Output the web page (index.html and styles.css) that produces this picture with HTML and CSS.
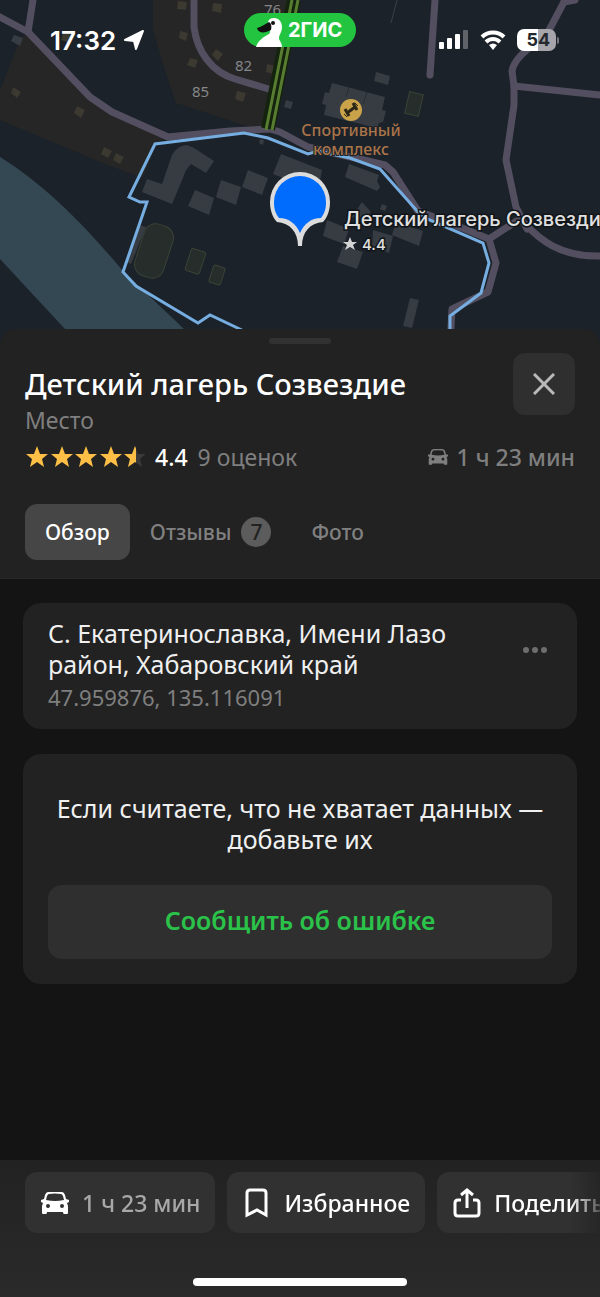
FILE: index.html
```html
<!DOCTYPE html>
<html lang="ru">
<head>
    <meta charset="UTF-8">
    <meta name="viewport" content="width=device-width, initial-scale=1.0">
    <title>Детский лагерь Созвездие</title>
    <link rel="stylesheet" href="styles.css">
</head>
<body>
    <!-- Map -->
    <div class="map">
        <svg class="map-canvas" viewBox="0 0 600 345" preserveAspectRatio="xMidYMin slice">
            <rect width="600" height="345" fill="#1c2229"/>
            <!-- Residential areas -->
            <g fill="#252625">
                <path d="M153 0H290L268 128 250 127 176 103 163 64 153 30Z"/>
                <path d="M0 90 20 40 29 32 92 97 112 112 165 138 155 145 143 178 110 166 0 120Z"/>
            </g>
            <path d="M0 157C50 188 90 232 123 271L184 329 195 345H80L65 329 0 259Z" fill="#344854"/>
            <!-- Small houses -->
            <g fill="#3b3930">
                <path d="M178 1l9 1-1 8-9-1zM213 3l9 1-1 9-9-2zM180 31l8 2-2 8-7-3zM216 49l7 5-5 7-6-6zM190 58l8 2-3 8-8-3zM267 64l9 2-2 8-8-2zM237 91l9 2-3 9-8-3zM13 87l8 5-4 6-6-5zM77 106l8 4-4 8-7-5zM104 147l8 4-4 7-7-4zM116 153l8 4-4 7-7-4zM63 33l9 2-2 8-9-3z"/>
            </g>
            <g fill="#363c41">
                <path d="M14 35l9 3-3 8-9-5zM286 100l7 2-2 7-7-2zM260 139l4 1-1 5-4-2z"/>
                <path d="M376 72l14 4-2 9-14-4z"/>
                <path d="M332 83l53 14-3 13 4 1-3 11-4 1-2 5-53-13 2-10-4-1 3-12 4 1z"/>
                <path d="M349 87l-3 10M367 92l-4 12" stroke="#272d33"/>
                <path d="M172 155Q178 145 187 145L194 148 214 161 206 173 191 164Q185 170 183 178L172 204 142 192 147 179 162 184Z"/>
                <path d="M195 190l19 8-5 17-21-9zM221 180l20 7-5 18-20-8zM248 170l20 8-6 17-20-8zM281 154l41 16-4 22-45-18z"/>
                <path d="M349 164l30 11-2 6 3 6-3 4-32-14zM362 202l9 10-8 8-11-3zM382 204l5 2-2 5-5-2z"/>
                <path d="M327 220l22 9-5 15-21-8zM373 230l20 6-4 17-17-6zM396 222l27 9-4 15-27-11zM343 246l20 6-6 17-20-7zM410 298l9 2-7 28-9-2zM139 225l7 2-15 37-4-2z"/>
            </g>
            <g fill="#262d2a" stroke="#3a4336">
                <rect x="139" y="224" width="30" height="54" rx="12" transform="rotate(18 154 251)"/>
                <rect x="188" y="250" width="15" height="23" rx="2" transform="rotate(18 196 261)"/>
                <rect x="211" y="266" width="12" height="18" rx="2" transform="rotate(18 217 275)"/>
                <rect x="407" y="93" width="14" height="22" transform="rotate(13 414 104)"/>
            </g>
            <!-- Roads -->
            <g fill="none" stroke="#534f60" stroke-width="7" stroke-linejoin="round" stroke-linecap="round">
                <path d="M0 17 28 32 90 97 112 112 168 137 230 131 270 129 280 132 308 147 355 158 385 165 393 172 418 211 455 225 489 239 496 263 488 292 452 309 450 345"/>
                <path d="M33 0 28 32"/>
                <path d="M194 0V27C197 52 212 72 235 79L272 90"/>
                <path d="M435 0 430 75"/>
                <path d="M565 0 546 36C530 46 514 58 512 71L514 86V105L506 160 516 207 527 229M489 239 520 219M523 222C540 240 560 257 600 256"/>
                <path d="M514 86 600 95M564 2 575 0"/>
            </g>
            <path d="M397 0 391 23" stroke="#3b4045"/>
            <path d="M294 0 268 129" stroke="#13230e" stroke-width="14"/>
            <path d="M292 0 266 130M298 0 272 130" stroke="#587d30" stroke-width="3"/>
            <!-- Camp territory -->
            <path d="M246 332 210 315 198 323 136 286 123 272 147 202 140 202 129 197 155 144 244 133 268 138 308 154 318 151 350 158 380 169 418 212 425 218 483 243 489 263 481 293 450 316V345" fill="none" stroke="#76aee2" stroke-width="3"/>
            <g class="house-number">
                <text x="264" y="15">76</text>
                <text x="235" y="71">82</text>
                <text x="192" y="97">85</text>
            </g>
            <!-- Sports POI -->
            <circle cx="351" cy="110" r="11" fill="#c9a24a"/>
            <g stroke="#2a2618" fill="none">
                <path d="M347 113 355 107" stroke-width="3"/>
                <path d="M345 109 349 116M353 103 357 110" stroke-width="3"/>
                <path d="M344 114 347 117M355 103 358 106" stroke-width="1"/>
            </g>
            <g class="poi-label">
                <text x="351" y="136">Спортивный</text>
                <text x="351" y="155">комплекс</text>
            </g>
            <!-- Pin -->
            <path d="M298 246C298 232 290 223 277 222C272 217 270 209 270 202A30 30 0 0 1 330 202C330 209 328 217 323 222C310 223 302 232 302 246Z" fill="#dcdcdc"/>
            <path d="M300 233C296 224 289 218 279 218C275 213 274 208 274 202A26 26 0 0 1 326 202C326 208 325 213 321 218C311 218 304 224 300 233Z" fill="#006cfe"/>
            <text class="camp-label" x="344" y="226">Детский лагерь Созвездие</text>
            <path d="M350 237l2 5h5l-4 3 2 5-5-3-5 3 2-5-4-3h5z" fill="#d4d4d4"/>
            <text class="camp-rating" x="362" y="250">4.4</text>
        </svg>

        <div class="status-bar">
            <div class="status-left">
                <span>17:32</span>
                <svg width="22" height="22" viewBox="0 0 22 22"><path d="M2 11 20 2 13 20 11 12Z" fill="#fff" stroke="#fff" stroke-width="2" stroke-linejoin="round"/></svg>
            </div>
            <div class="brand">
                <svg width="30" height="34" viewBox="0 0 30 34">
                    <path d="M2 34C4 28 9 24 15 21C17 19 16 17 14 14C13 8 15 5 20 5C25 5 28 9 28 14C28 19 25 22 25 25C25 28 28 29 28 34Z" fill="#fff"/>
                    <path d="M15 9C11 11 7 14 3 15C4 20 10 21 17 17C18 13 17 10 15 9Z" fill="#111"/>
                    <circle cx="19" cy="10" r="2" fill="#111"/>
                </svg>
                <span>2ГИС</span>
            </div>
            <div class="status-right">
                <svg width="30" height="20" viewBox="0 0 30 20" fill="#fff">
                    <rect x="0" y="12" width="5" height="7" rx="1"/>
                    <rect x="8" y="8" width="5" height="11" rx="1"/>
                    <rect x="16" y="4" width="5" height="15" rx="1"/>
                    <rect x="24" y="0" width="5" height="19" rx="1" opacity=".3"/>
                </svg>
                <svg width="26" height="20" viewBox="0 0 26 20" fill="none" stroke="#fff" stroke-width="4">
                    <path d="M2 7C8 1 18 1 24 7M6 12C10 8 16 8 20 12"/>
                    <path d="M9 15Q13 12 17 15L13 20Z" fill="#fff" stroke="none"/>
                </svg>
                <div class="battery"><span>5</span><span class="battery-empty">4</span></div>
            </div>
        </div>
    </div>

    <!-- Place card header -->
    <header class="sheet">
        <div class="grabber"></div>
        <div class="title-row">
            <div>
                <h1>Детский лагерь Созвездие</h1>
                <p class="kind">Место</p>
            </div>
            <button class="close" aria-label="Закрыть">
                <svg width="22" height="22" viewBox="0 0 22 22" stroke="#bababa" stroke-width="3"><path d="M1 1 21 21M21 1 1 21"/></svg>
            </button>
        </div>
        <div class="rating-row">
            <svg width="120" height="22" viewBox="0 0 120 22">
                <defs>
                    <path id="star" d="M11 0 14 8 22 8 16 13 18 21 11 16 4 21 6 13 0 8 8 8Z"/>
                    <clipPath id="half"><rect width="12" height="22"/></clipPath>
                </defs>
                <g fill="#fdbf45">
                    <use href="#star" x="1"/>
                    <use href="#star" x="26"/>
                    <use href="#star" x="50"/>
                    <use href="#star" x="75"/>
                </g>
                <g transform="translate(99 0)">
                    <use href="#star" fill="#3a3a3a"/>
                    <use href="#star" fill="#fdbf45" clip-path="url(#half)"/>
                </g>
            </svg>
            <strong>4.4</strong>
            <span>9 оценок</span>
            <span class="drive">
                <svg width="20" height="16" viewBox="0 0 28 22"><use href="#car"/></svg>
                1 ч 23 мин
            </span>
        </div>
        <nav class="tabs">
            <button class="tab active">Обзор</button>
            <button class="tab">Отзывы <span class="count">7</span></button>
            <button class="tab">Фото</button>
        </nav>
    </header>

    <main>
        <section class="card address">
            <div>
                <p>С. Екатеринославка, Имени Лазо район, Хабаровский край</p>
                <p class="coords">47.959876, 135.116091</p>
            </div>
            <button class="more" aria-label="Ещё">
                <svg width="26" height="8" viewBox="0 0 26 8" fill="#6e6e6e"><circle cx="4" cy="4" r="3"/><circle cx="13" cy="4" r="3"/><circle cx="22" cy="4" r="3"/></svg>
            </button>
        </section>
        <section class="card feedback">
            <p>Если считаете, что не хватает данных — добавьте их</p>
            <button class="report">Сообщить об ошибке</button>
        </section>
    </main>

    <!-- Bottom actions -->
    <footer>
        <div class="actions">
            <button class="action time">
                <svg width="28" height="22" viewBox="0 0 28 22">
                    <path id="car" fill="currentColor" fill-rule="evenodd" d="M7 0Q14-1 21 0Q23 0 24 3L25 7 28 8V10L26 11 27 14V21Q27 22 26 22H23Q22 22 22 20H6Q6 22 5 22H2Q1 22 1 21V14L2 11 0 10V8L3 7 4 3Q5 0 7 0ZM8 2Q7 2 6 4L5 8Q14 10 23 8L22 4Q21 2 20 2Q14 1 8 2ZM7 12A2 2 0 1 0 7 16 2 2 0 1 0 7 12ZM21 12A2 2 0 1 0 21 16 2 2 0 1 0 21 12Z"/>
                </svg>
                <span>1 ч 23 мин</span>
            </button>
            <button class="action">
                <svg width="28" height="30" viewBox="0 0 28 30" fill="none" stroke="#fff" stroke-width="3"><path d="M4 27V5Q4 2 7 2H20Q23 2 23 5V27L14 22Z"/></svg>
                <span>Избранное</span>
            </button>
            <button class="action">
                <svg width="28" height="30" viewBox="0 0 28 30" fill="none" stroke="#fff" stroke-width="3"><path d="M8 12H5Q2 12 2 15V25Q2 28 5 28H23Q26 28 26 25V15Q26 12 23 12H20M14 20V2M8 7 14 2 20 7"/></svg>
                <span>Поделиться</span>
            </button>
        </div>
        <div class="home-indicator"></div>
    </footer>
</body>
</html>
```
FILE: styles.css
```css
* { box-sizing: border-box; }
body { margin: 0; min-height: 100vh; display: flex; flex-direction: column; background: #141414; color: #fff; font-family: "Noto Sans", sans-serif; overflow-x: hidden; }
h1, p { margin: 0; }
button { border: none; padding: 0; background: none; color: inherit; font: inherit; cursor: pointer; }
svg { display: block; flex: none; }

/* Map */
.map { position: relative; height: 345px; overflow: hidden; background: #1c2229; }
.map-canvas { width: 100%; height: 100%; }
.house-number { font-size: 15px; fill: #85878a; }
.poi-label { font-size: 16px; font-weight: 500; fill: #aa7449; text-anchor: middle; paint-order: stroke; stroke: #1c2229; stroke-width: 2px; }
.camp-label, .camp-rating { font-family: Inter, sans-serif; font-weight: 500; fill: #e0e0e0; paint-order: stroke; stroke: #111519; stroke-width: 3px; }
.camp-label { font-size: 20px; }
.camp-rating { font-size: 15px; }

.status-bar { position: absolute; top: 0; left: 0; right: 0; padding-top: 13px; display: grid; grid-template-columns: 1fr auto 1fr; font-family: Inter, sans-serif; }
.status-left { display: flex; align-items: center; gap: 7px; height: 54px; padding-left: 50px; font-size: 26px; font-weight: 600; }
.status-right { display: flex; align-items: center; justify-content: flex-end; gap: 11px; height: 54px; padding-right: 44px; }
.brand { display: flex; align-items: center; gap: 4px; width: 112px; height: 34px; padding-left: 10px; border-radius: 17px; background: #23c43f; font-size: 20px; font-weight: 700; }
.battery { position: relative; display: flex; width: 39px; height: 22px; color: #25282d; font-size: 18px; line-height: 22px; font-weight: 700; }
.battery::after { content: ""; position: absolute; top: 8px; right: -3px; width: 2px; height: 7px; border-radius: 0 2px 2px 0; background: #77777e; }
.battery span { flex: 1; text-align: right; border-radius: 7px 0 0 7px; background: #fff; }
.battery .battery-empty { flex: none; width: 18px; text-align: left; border-radius: 0 7px 7px 0; background: #a5a5ab; }

/* Place card header */
.sheet { position: relative; margin-top: -16px; padding: 9px 25px 18px; border-radius: 16px 16px 0 0; border-bottom: 1px solid #282828; background: #222; }
.grabber { width: 62px; height: 6px; margin: 0 auto; border-radius: 3px; background: #313131; }
.title-row { display: flex; justify-content: space-between; padding-top: 9px; }
h1 { padding-top: 12px; font-size: 29px; line-height: 38px; font-weight: 500; }
.kind { color: #7f7f7f; font-size: 23px; line-height: 34px; }
.close { display: flex; align-items: center; justify-content: center; flex: none; width: 62px; height: 62px; border-radius: 12px; background: #2f2f2f; }
.rating-row { display: flex; align-items: center; height: 36px; margin-top: 2px; gap: 10px; color: #7f7f7f; font-size: 23px; }
.rating-row strong { color: #fff; font-weight: 500; }
.drive { display: flex; align-items: center; gap: 9px; margin-left: auto; font-weight: 500; }
.tabs { display: flex; margin-top: 29px; }
.tab { display: flex; align-items: center; gap: 10px; height: 56px; padding: 0 20px; border-radius: 12px; color: #808080; font-size: 21px; font-weight: 500; }
.tab.active { background: #464646; color: #fff; }
.count { width: 30px; height: 30px; border-radius: 15px; background: #5c5c5c; color: #222; line-height: 30px; }

/* Cards */
main { flex: 1; display: flex; flex-direction: column; gap: 25px; padding: 24px 23px; }
.card { border-radius: 18px; background: #222; padding: 25px; font-size: 25px; line-height: 31px; color: #f0f0f0; }
.address { display: flex; align-items: flex-start; justify-content: space-between; gap: 48px; padding: 15px 29px 15px 25px; }
.coords { color: #7f7f7f; font-size: 22px; line-height: 34px; }
.more { padding: 28px 0; }
.feedback { text-align: center; padding-top: 39px; }
.report { display: block; width: 100%; height: 74px; margin-top: 30px; padding-bottom: 3px; border-radius: 14px; background: #2f2f2f; color: #2bc24a; font-weight: 600; }

/* Bottom actions */
footer { background: linear-gradient(#222, #2a2a2a); padding: 12px 0 11px; }
.actions { display: flex; gap: 12px; padding-left: 25px; overflow: hidden; mask-image: linear-gradient(to right, #000 calc(100% - 30px), rgba(0, 0, 0, 0.2)); }
.action { display: flex; align-items: center; gap: 13px; flex: none; height: 61px; padding: 0 15px 0 16px; border-radius: 12px; background: #313131; font-size: 23px; font-weight: 500; }
.time span { color: #a8a8a8; }
.home-indicator { width: 214px; height: 8px; margin: 45px auto 0; border-radius: 4px; background: #fff; }
```
